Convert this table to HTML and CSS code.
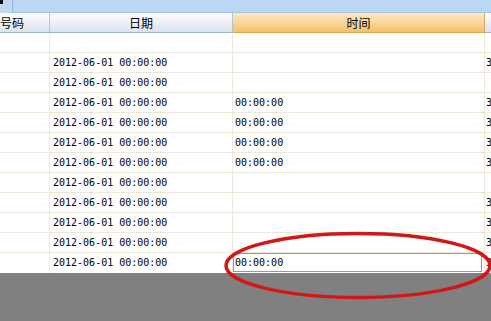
FILE: index.html
```html
<!DOCTYPE html>
<html>
<head>
<meta charset="utf-8">
<link rel="stylesheet" href="styles.css">
</head>
<body>
<div class="app">
  <div class="topbar">
    <div class="corner"><span class="mark"></span></div>
    <div class="bar"></div>
  </div>
  <div class="grid">
    <div class="hd c0"><span class="clip">号码</span></div>
    <div class="hd c1">日期</div>
    <div class="hd c2 sel">时间</div>
    <div class="hd c3"></div>

    <div class="cell c0"></div><div class="cell c1"></div><div class="cell c2"></div><div class="cell c3"></div>

    <div class="cell c0"></div><div class="cell c1">2012-06-01 00:00:00</div><div class="cell c2"></div><div class="cell c3">3</div>
    <div class="cell c0"></div><div class="cell c1">2012-06-01 00:00:00</div><div class="cell c2"></div><div class="cell c3"></div>
    <div class="cell c0"></div><div class="cell c1">2012-06-01 00:00:00</div><div class="cell c2">00:00:00</div><div class="cell c3">3</div>
    <div class="cell c0"></div><div class="cell c1">2012-06-01 00:00:00</div><div class="cell c2">00:00:00</div><div class="cell c3">3</div>
    <div class="cell c0"></div><div class="cell c1">2012-06-01 00:00:00</div><div class="cell c2">00:00:00</div><div class="cell c3">3</div>
    <div class="cell c0"></div><div class="cell c1">2012-06-01 00:00:00</div><div class="cell c2">00:00:00</div><div class="cell c3">3</div>
    <div class="cell c0"></div><div class="cell c1">2012-06-01 00:00:00</div><div class="cell c2"></div><div class="cell c3"></div>
    <div class="cell c0"></div><div class="cell c1">2012-06-01 00:00:00</div><div class="cell c2"></div><div class="cell c3">3</div>
    <div class="cell c0"></div><div class="cell c1">2012-06-01 00:00:00</div><div class="cell c2"></div><div class="cell c3">3</div>
    <div class="cell c0"></div><div class="cell c1">2012-06-01 00:00:00</div><div class="cell c2"></div><div class="cell c3">3</div>
    <div class="cell c0 last"></div><div class="cell c1 last">2012-06-01 00:00:00</div><div class="cell c2 last"><div class="editor">00:00:00</div></div><div class="cell c3 last">3</div>
  </div>
  <div class="empty"></div>
  <svg class="ring" width="491" height="321" viewBox="0 0 491 321">
    <ellipse cx="358" cy="265.5" rx="132" ry="32" fill="none" stroke="#d31717" stroke-width="3.5"/>
  </svg>
</div>
</body>
</html>
```

FILE: styles.css
```css
html, body {
  margin: 0;
  padding: 0;
}
body {
  width: 491px;
  height: 321px;
  overflow: hidden;
  background: #808080;
  font-family: "DejaVu Sans Mono", "Noto Sans CJK SC", monospace;
}
.app {
  position: relative;
  width: 491px;
  height: 321px;
  display: flex;
  flex-direction: column;
  overflow: hidden;
}
.topbar {
  height: 13px;
  display: flex;
  flex: none;
}
.corner {
  width: 12px;
  background: #c2d9f4;
  border-right: 1px solid #9fb5cf;
  position: relative;
}
.mark {
  position: absolute;
  left: 0;
  top: 0;
  width: 3px;
  height: 4px;
  background: #111;
}
.bar {
  flex: 1;
  background: #bcd6f6;
  border-bottom: 1px solid #a8c2e2;
}
.grid {
  display: grid;
  grid-template-columns: 50px 183px 252px 6px;
  grid-auto-rows: 20px;
  grid-template-rows: 20px;
  background: #fff;
  flex: none;
}
.hd {
  box-sizing: border-box;
  background: linear-gradient(#fcfdfe, #e9eef5 60%, #dbe3ee);
  border-bottom: 1px solid #9fb3cc;
  border-right: 1px solid #b4c3d6;
  font-family: "Noto Sans CJK SC", sans-serif;
  font-size: 12px;
  line-height: 19px;
  color: #000;
  text-align: center;
  overflow: hidden;
  white-space: nowrap;
}
.hd.c0 {
  text-align: left;
}
.hd.sel {
  background: linear-gradient(#fde9c0, #f9d79a 50%, #f4c06a);
  border-bottom-color: #e1a24a;
  border-right-color: #d9a85a;
}
.hd.c3 {
  border-right: none;
}
.cell {
  box-sizing: border-box;
  border-bottom: 1px solid #ebe8d8;
  border-right: 1px solid #ebe8d8;
  font-size: 10px;
  line-height: 20px;
  padding-left: 3px;
  color: #000;
  white-space: nowrap;
  overflow: hidden;
}
.cell.c0 {
  border-right-color: #efedde;
}
.cell.c3 {
  border-right: none;
  padding-left: 1px;
}
.cell.c2 {
  padding-left: 2px;
}
.cell.last {
  border-bottom: none;
}
.cell.c2.last {
  padding: 0;
}
.editor {
  box-sizing: border-box;
  width: 249px;
  height: 19px;
  border: 1px solid #7f9db9;
  background: #fff;
  padding-left: 1px;
  line-height: 18px;
  font-size: 10px;
}
.empty {
  flex: 1;
  background: #808080;
}
.ring {
  position: absolute;
  left: 0;
  top: 0;
  pointer-events: none;
}
```
